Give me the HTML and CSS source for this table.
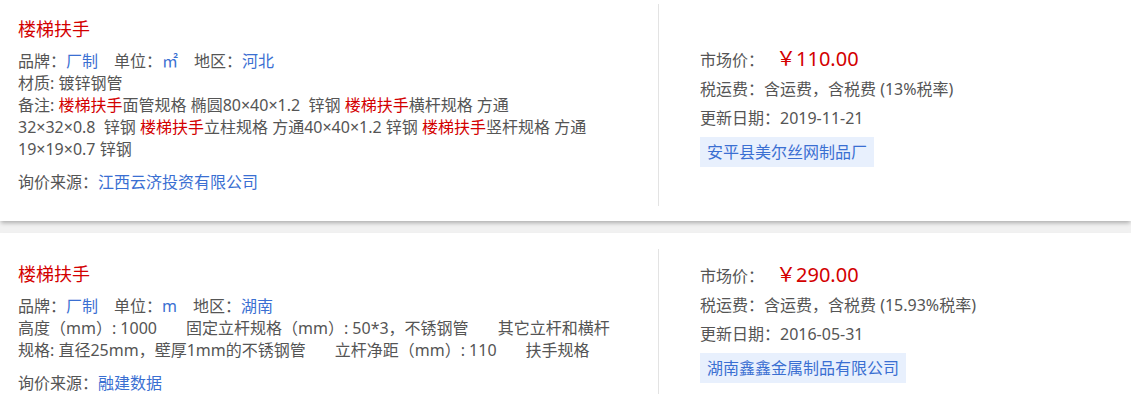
FILE: index.html
```html
<!DOCTYPE html>
<html lang="zh-CN">
<head>
  <meta charset="UTF-8" />
  <meta name="viewport" content="width=device-width, initial-scale=1.0"/>
  <title>楼梯扶手 | 价格</title>
  <link rel="stylesheet" href="styles.css">
</head>
<body>
  <div class="list">

    <div class="card">
      <div class="info">
        <h3 class="name">楼梯扶手</h3>
        <p>品牌：<a href="#">厂制</a><span class="gap"></span>单位：<a href="#">㎡</a><span class="gap"></span>地区：<a href="#">河北</a></p>
        <p>材质: 镀锌钢管</p>
        <p>备注: <em>楼梯扶手</em>面管规格 椭圆80×40×1.2&nbsp; 锌钢 <em>楼梯扶手</em>横杆规格 方通<br>32×32×0.8&nbsp; 锌钢 <em>楼梯扶手</em>立柱规格 方通40×40×1.2 锌钢 <em>楼梯扶手</em>竖杆规格 方通<br>19×19×0.7 锌钢</p>
        <p class="source">询价来源：<a href="#">江西云济投资有限公司</a></p>
      </div>
      <div class="price">
        <p class="market">市场价：<span class="amount">￥110.00</span></p>
        <p>税运费：含运费，含税费 (13%税率)</p>
        <p>更新日期：2019-11-21</p>
        <a class="vendor" href="#">安平县美尔丝网制品厂</a>
      </div>
    </div>

    <div class="card">
      <div class="info short">
        <h3 class="name">楼梯扶手</h3>
        <p>品牌：<a href="#">厂制</a><span class="gap"></span>单位：<a href="#">m</a><span class="gap"></span>地区：<a href="#">湖南</a></p>
        <p>高度（mm）: 1000<span class="gap wide"></span>固定立杆规格（mm）: 50*3，不锈钢管<span class="gap wide"></span>其它立杆和横杆<br>规格: 直径25mm，壁厚1mm的不锈钢管<span class="gap wide"></span>立杆净距（mm）: 110<span class="gap wide"></span>扶手规格</p>
        <p class="source">询价来源：<a href="#">融建数据</a></p>
      </div>
      <div class="price">
        <p class="market">市场价：<span class="amount">￥290.00</span></p>
        <p>税运费：含运费，含税费 (15.93%税率)</p>
        <p>更新日期：2016-05-31</p>
        <a class="vendor" href="#">湖南鑫鑫金属制品有限公司</a>
      </div>
    </div>

  </div>
</body>
</html>
```

FILE: styles.css
```css
body {
  font-family: 'Noto Sans', 'Noto Sans CJK JP', 'Noto Sans CJK SC', sans-serif;
  background-color: #f1f1f1;
  color: #555;
  margin: 0;
  padding: 0;
}

a {
  color: #3a6fd2;
  text-decoration: none;
}

p {
  margin: 0;
}

.list {
  margin-top: -12px;
  display: flex;
  flex-direction: column;
  gap: 12px;
}

.card {
  display: flex;
  background-color: white;
  padding: 16px 0 15px;
  box-shadow: 0 3px 4px -1px rgba(0,0,0,0.28);
}

.info {
  width: 620px;
  padding: 13px 20px 13px 18px;
  font-size: 16px;
  line-height: 22px;
  white-space: nowrap;
}

.info.short {
  padding-bottom: 0;
}

.info .name {
  margin: 0 0 9px;
  font-size: 18px;
  line-height: 24px;
  font-weight: normal;
  color: #d30000;
}

.info em {
  font-style: normal;
  color: #d30000;
}

.info .gap {
  display: inline-block;
  width: 16px;
}

.info .gap.wide {
  width: 29px;
}

.info .source {
  margin-top: 11px;
}

.price {
  flex: 1;
  border-left: 1px solid #e3e3e3;
  padding-left: 41px;
  display: flex;
  flex-direction: column;
  justify-content: center;
  align-items: flex-start;
  font-size: 16px;
  line-height: 29px;
}

.price .amount {
  margin-left: 12px;
  font-size: 20px;
  color: #d30000;
}

.vendor {
  margin-top: 4px;
  padding: 0 7px;
  line-height: 30px;
  background-color: #e8f0fd;
}
```
